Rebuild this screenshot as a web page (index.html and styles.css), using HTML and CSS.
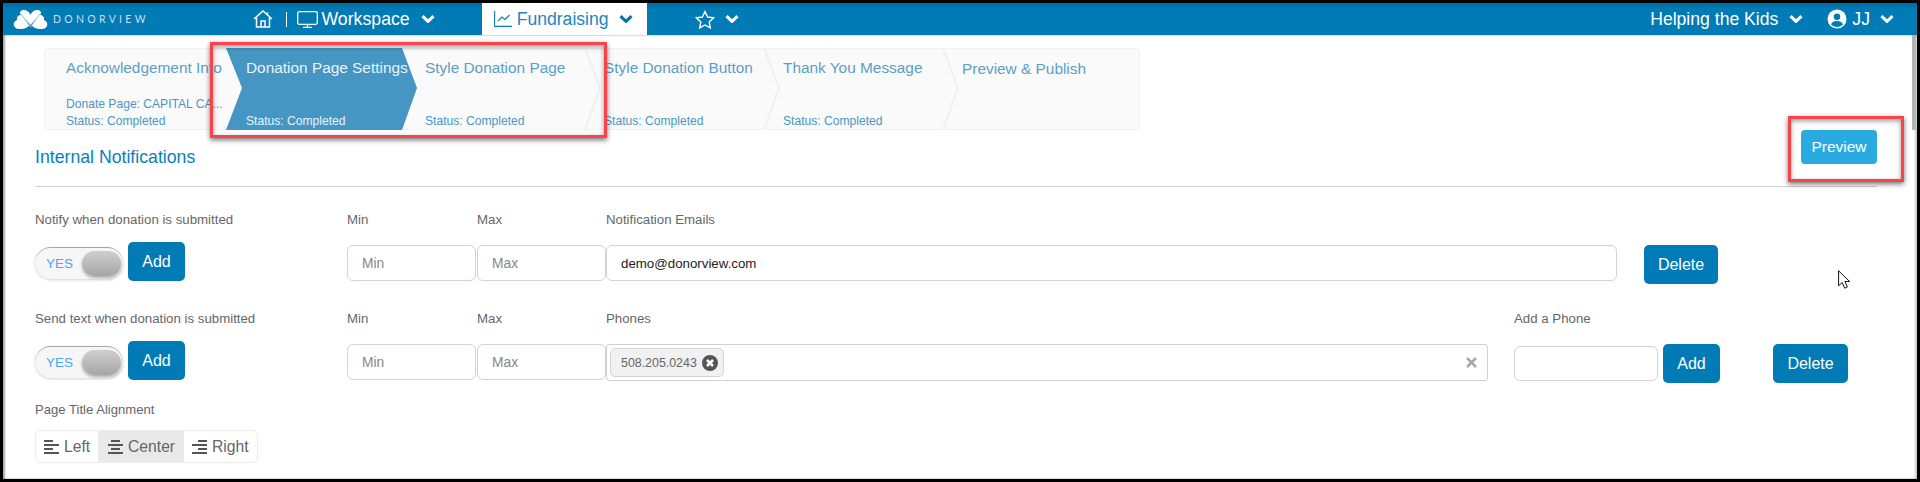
FILE: index.html
```html
<!DOCTYPE html>
<html lang="en">
<head>
<meta charset="utf-8">
<title>Donorview</title>
<link rel="stylesheet" href="styles.css">
</head>
<body>
<div class="frame">
  <header class="topbar">
    <div class="logo">
      <svg class="logo-mark" viewBox="0 0 36 22"><path fill="#fff" d="M9 6C5 6 3 9 4 11.500 1 12.500 0 15 .5 17 1.500 20.500 5 21 8 21c4 0 7-1.500 9-4C14 13 11 9.500 9 6zM27 6c4 0 6 3 5 5.500 3 1 4 3.500 3.500 5.500-1 3.500-4.500 4-7.500 4-4 0-7-1.500-9-4 3-4 6-7.500 8-11z"/><path fill="#fff" d="M18 6c1.500-3 4-5 7-5 3 0 4.500 2 4 4l-9.500 10L18 17l-1.500-2L7 5C6.500 3 8 1 11 1c3 0 5.500 2 7 5z"/><path fill="none" stroke="#a9b6d6" stroke-width="1" d="M8 5l10 14M28 5L18 19"/></svg>
      <span class="wordmark">DONORVIEW</span>
    </div>
    <nav class="nav">
      <svg class="ic-home" viewBox="0 0 20 18" fill="none" stroke="#fff" stroke-width="1.500"><path d="M1 9L10 1l9 8M3.500 7.500V17h13V7.500M8 17v-6h4v6M14.500 2.500v3"/></svg>
      <span class="nav-bar"></span>
      <svg class="ic-monitor" viewBox="0 0 21 17" fill="none" stroke="#fff" stroke-width="1.300"><rect x=".7" y=".7" width="19.600" height="12.600" rx="1.500"/><path d="M10.500 13.500V16M6 16.300h9"/></svg>
      <span class="nav-text">Workspace</span>
      <svg class="chev" viewBox="0 0 14 8" fill="none" stroke="#fff" stroke-width="3"><path d="M1.500 1.200L7 6.400l5.500-5.200"/></svg>
      <a class="tab">
        <svg class="ic-chart" viewBox="0 0 18 16" fill="none" stroke="#0a7cb8" stroke-width="1.100"><path d="M.6 0v15.400H18M4 10l4-4 3 2.500L15.500 4"/></svg>
        <span class="tab-text">Fundraising</span>
        <svg class="chev" viewBox="0 0 14 8" fill="none" stroke="#0a6fa6" stroke-width="3"><path d="M1.500 1.200L7 6.400l5.500-5.200"/></svg>
      </a>
      <svg class="ic-star" viewBox="0 0 20 19" fill="none" stroke="#fff" stroke-width="1.400"><path d="M10 1.500l2.600 5.500 6 .8-4.400 4.100 1.100 6L10 15l-5.300 2.900 1.100-6L1.400 7.800l6-.8z"/></svg>
      <svg class="chev chev-star" viewBox="0 0 14 8" fill="none" stroke="#fff" stroke-width="3"><path d="M1.500 1.200L7 6.400l5.500-5.200"/></svg>
    </nav>
    <div class="account">
      <span class="nav-text org">Helping the Kids</span>
      <svg class="chev" viewBox="0 0 14 8" fill="none" stroke="#fff" stroke-width="3"><path d="M1.500 1.200L7 6.400l5.500-5.200"/></svg>
      <svg class="ic-user" viewBox="0 0 20 20"><circle cx="10" cy="10" r="9.500" fill="#fff"/><circle cx="10" cy="7.800" r="3.300" fill="#007bb6"/><path fill="#007bb6" d="M4 15.500c1-2.800 3-3.600 6-3.600s5 .8 6 3.600c-1.500 1.500-3.500 2.500-6 2.500s-4.500-1-6-2.500z"/></svg>
      <span class="nav-text initials">JJ</span>
      <svg class="chev" viewBox="0 0 14 8" fill="none" stroke="#fff" stroke-width="3"><path d="M1.500 1.200L7 6.400l5.500-5.200"/></svg>
    </div>
  </header>

  <main class="page">
    <section class="steps">
      <div class="step step-first">
        <div class="step-title">Acknowledgement Info</div>
        <div class="step-meta">Donate Page: CAPITAL CA...</div>
        <div class="step-meta">Status: Completed</div>
      </div>
      <div class="step step-active">
        <svg class="step-shape" viewBox="0 0 191 82"><path fill="#4596c3" d="M0 0H176L191 40 176 82H0L16 40z"/></svg>
        <div class="step-title">Donation Page Settings</div>
        <div class="step-meta">Status: Completed</div>
      </div>
      <div class="step">
        <div class="step-title">Style Donation Page</div>
        <div class="step-meta">Status: Completed</div>
      </div>
      <div class="step">
        <svg class="step-sep" viewBox="0 0 18 82" fill="none" stroke="#f1f1f1" stroke-width="2.500"><path d="M1 0l15 40-15 42"/></svg>
        <div class="step-title">Style Donation Button</div>
        <div class="step-meta">Status: Completed</div>
      </div>
      <div class="step">
        <svg class="step-sep" viewBox="0 0 18 82" fill="none" stroke="#f1f1f1" stroke-width="2.500"><path d="M1 0l15 40-15 42"/></svg>
        <div class="step-title">Thank You Message</div>
        <div class="step-meta">Status: Completed</div>
      </div>
      <div class="step">
        <svg class="step-sep" viewBox="0 0 18 82" fill="none" stroke="#f1f1f1" stroke-width="2.500"><path d="M1 0l15 40-15 42"/></svg>
        <div class="step-title step-title-low">Preview &amp; Publish</div>
      </div>
    </section>

    <section class="section-head">
      <h2 class="section-title">Internal Notifications</h2>
      <button class="btn-preview">Preview</button>
    </section>

    <section class="row row-email">
      <label class="lbl">Notify when donation is submitted</label>
      <label class="lbl">Min</label>
      <label class="lbl">Max</label>
      <label class="lbl lbl-wide">Notification Emails</label>
      <div class="toggle-cell">
        <div class="toggle"><span class="toggle-yes">YES</span><span class="knob"></span></div>
        <button class="btn btn-add">Add</button>
      </div>
      <input class="field" placeholder="Min">
      <input class="field" placeholder="Max">
      <input class="field field-email" value="demo@donorview.com">
      <button class="btn btn-delete">Delete</button>
    </section>

    <section class="row row-phone">
      <label class="lbl">Send text when donation is submitted</label>
      <label class="lbl">Min</label>
      <label class="lbl">Max</label>
      <label class="lbl">Phones</label>
      <label class="lbl lbl-add-phone">Add a Phone</label>
      <div class="toggle-cell">
        <div class="toggle"><span class="toggle-yes">YES</span><span class="knob"></span></div>
        <button class="btn btn-add">Add</button>
      </div>
      <input class="field" placeholder="Min">
      <input class="field" placeholder="Max">
      <div class="phones">
        <span class="chip">508.205.0243
          <svg class="chip-x" viewBox="0 0 16 16"><circle cx="8" cy="8" r="8" fill="#555"/><path stroke="#fff" stroke-width="2.600" d="M5 5l6 6M11 5l-6 6"/></svg>
        </span>
        <svg class="clear-x" viewBox="0 0 11 11" stroke="#a8a8a8" stroke-width="2.500"><path d="M1 1l9 9M10 1l-9 9"/></svg>
      </div>
      <input class="field field-phone">
      <button class="btn btn-add-phone">Add</button>
      <button class="btn btn-delete-phone">Delete</button>
    </section>

    <section class="align-block">
      <label class="lbl">Page Title Alignment</label>
      <div class="align-group">
        <span class="align-item align-left">
          <svg class="ic-align" viewBox="0 0 15 14" fill="#555"><path d="M0 0h9v2H0zM0 4h15v2H0zM0 8h9v2H0zM0 12h15v2H0z"/></svg>Left
        </span>
        <span class="align-item align-center is-on">
          <svg class="ic-align" viewBox="0 0 15 14" fill="#555"><path d="M3 0h9v2H3zM0 4h15v2H0zM3 8h9v2H3zM0 12h15v2H0z"/></svg>Center
        </span>
        <span class="align-item align-right">
          <svg class="ic-align" viewBox="0 0 15 14" fill="#555"><path d="M6 0h9v2H6zM0 4h15v2H0zM6 8h9v2H6zM0 12h15v2H0z"/></svg>Right
        </span>
      </div>
    </section>
  </main>

  <div class="scroll-thumb"></div>
  <div class="callout callout-steps"></div>
  <div class="callout callout-preview"></div>
  <svg class="cursor" viewBox="0 0 12 19"><path fill="#fff" stroke="#111" stroke-width="1" d="M.6.8v15l3.600-3.300 2.500 5.700 2.700-1.200-2.500-5.500h4.700z"/></svg>
</div>
</body>
</html>
```
FILE: styles.css
```css
* { box-sizing: border-box; }
html, body { margin: 0; padding: 0; }
body { font-family: "Liberation Sans", Arial, sans-serif; background: #fff; overflow: hidden; }

.frame {
  position: relative;
  width: 1920px;
  height: 482px;
  border: 3px solid #000;
  overflow: hidden;
  background: #fff;
}

/* top bar */
.topbar {
  display: flex;
  align-items: center;
  height: 32px;
  background: linear-gradient(#006a9f 0, #007bb6 6px, #007bb6 100%);
  color: #fff;
}
.logo { display: flex; align-items: center; width: 250px; padding-left: 10px; }
.logo-mark { width: 35px; height: 21px; margin-top: 1px; }
.wordmark {
  margin-left: 5px;
  font-family: Lato, "Liberation Sans", sans-serif;
  font-size: 10.500px;
  letter-spacing: 3.300px;
  color: #c9dfec;
}
.nav { display: flex; align-items: center; height: 100%; }
.ic-home { width: 20px; height: 18px; margin-top: -1px; }
.nav-bar { width: 1px; height: 15px; margin-left: 13px; background: #fff; }
.ic-monitor { width: 21px; height: 17px; margin-left: 10px; }
.nav-text { font-size: 17.700px; line-height: 20px; color: #fff; margin-left: 3.500px; }
.chev { width: 14px; height: 8px; margin-left: 11px; flex: none; }
.tab {
  display: flex;
  align-items: center;
  height: 100%;
  margin-left: 47px;
  padding: 0 14px 0 12px;
  background: #fff;
}
.ic-chart { width: 18px; height: 16px; }
.tab-text { margin-left: 5px; font-size: 17.600px; color: #1e86bd; }
.tab .chev { margin-left: 10px; }
.ic-star { width: 20px; height: 19px; margin-left: 48px; }
.chev-star { margin-left: 10px; }
.account { display: flex; align-items: center; margin-left: auto; padding-right: 23px; }
.org { font-size: 17.600px; margin-left: 0; }
.ic-user { width: 20px; height: 20px; margin-left: 24px; }
.initials { margin-left: 5px; }
.account .chev:last-child { margin-left: 10px; }

/* page */
.page {
  height: 444px;
  box-shadow: inset 2px 0 2px rgba(0, 0, 0, .35), inset -2px 0 2px rgba(0, 0, 0, .2);
}

.steps {
  display: grid;
  grid-template-columns: 182px 179px 179px 179px 179px 1fr;
  width: 1096px;
  height: 82px;
  margin-left: 41px;
  position: relative;
  top: 13px;
  background: #fafafa;
  border-radius: 5px;
  box-shadow: inset 0 0 0 1px #f1f1f1;
}
.step {
  position: relative;
  display: flex;
  flex-direction: column;
  justify-content: flex-end;
  padding: 10px 0 5px 20px;
  white-space: nowrap;
  color: #4b97c4;
}
.step-first { padding-left: 22px; }
.step-title { margin-bottom: auto; font-size: 15.400px; line-height: 20px; color: #5a9fc9; position: relative; }
.step-title-low { top: 1px; margin-bottom: 52px; }
.step-meta { font-size: 12.100px; line-height: 17px; position: relative; }
.step-shape { position: absolute; left: 0; top: 0; width: 191px; height: 82px; }
.step-active .step-title, .step-active .step-meta { color: #e9f3f9; }
.step-sep { position: absolute; left: 0; top: 0; width: 18px; height: 82px; }

/* section heading */
.section-head {
  display: flex;
  justify-content: space-between;
  align-items: flex-start;
  height: 57px;
  margin: 13px 40px 0 32px;
  border-bottom: 1px solid #d2d2d2;
}
.section-title {
  margin: 17px 0 0;
  font-size: 17.700px;
  line-height: 20px;
  font-weight: 400;
  color: #0a7fbc;
}
.btn-preview {
  width: 76px;
  height: 34px;
  padding: 0;
  border: 0;
  border-radius: 4px;
  background: #29abe2;
  color: #fff;
  font: 15.500px "Liberation Sans", Arial, sans-serif;
}

/* form rows */
.row {
  display: grid;
  grid-template-rows: 16px 42px;
  row-gap: 14px;
  margin-left: 32px;
}
.row-email {
  grid-template-columns: 312px 130px 129px 1011px 27px 74px;
  margin-top: 25px;
}
.row-phone {
  grid-template-columns: 312px 130px 129px 882px 26px 144px 5px 57px 53px 75px;
  margin-top: 27px;
}
.lbl {
  font-size: 13.250px;
  line-height: 16px;
  color: #666;
  white-space: nowrap;
}
.lbl-wide { grid-column: 4 / span 3; }
.lbl-add-phone { grid-column: 6 / span 5; }
.toggle-cell { display: flex; align-items: flex-start; gap: 5px; }
.toggle {
  display: flex;
  align-items: center;
  justify-content: space-between;
  width: 88px;
  height: 32px;
  margin-top: 5px;
  padding: 0 2px 0 11px;
  border-radius: 16px;
  background: #f6f6f6;
  border-top: 1px solid #a8a8a8;
  box-shadow: 0 1px 3px rgba(0, 0, 0, .18);
}
.toggle-yes { font-size: 13.500px; color: #4aa8f0; }
.knob {
  width: 39px;
  height: 25px;
  border-radius: 13px;
  background: linear-gradient(#cfcfcf, #a6a6a6);
  box-shadow: 0 2px 3px rgba(0, 0, 0, .3);
}
.btn {
  height: 39px;
  padding: 0;
  border: 0;
  border-radius: 5px;
  background: #007bb6;
  color: #fff;
  font: 16px "Liberation Sans", Arial, sans-serif;
}
.btn-add { width: 57px; }
.btn-delete { grid-column: 6; width: 74px; margin-top: 3px; }
.field {
  width: 129px;
  height: 36px;
  margin-top: 3px;
  padding: 0 14px;
  border: 1px solid #d0d3dc;
  border-radius: 6px;
  background: #fff;
  font: 13.300px "Liberation Sans", Arial, sans-serif;
  color: #222;
  outline: 0;
}
.field::placeholder { color: #888; opacity: 1; font-size: 13.800px; }
.field-email { width: 1011px; grid-column: 4; }
.phones {
  display: flex;
  align-items: center;
  justify-content: space-between;
  width: 882px;
  height: 37px;
  margin-top: 3px;
  padding: 0 5px 0 3px;
  border: 1px solid #d0d0d0;
  border-radius: 3px;
}
.chip {
  display: flex;
  align-items: center;
  justify-content: space-between;
  width: 114px;
  height: 29px;
  padding: 0 5px 0 10px;
  border: 1px solid #d4d4d4;
  border-radius: 5px;
  background: #f1f1f1;
  font-size: 12.400px;
  color: #666;
}
.chip-x { width: 16px; height: 16px; }
.clear-x { width: 11px; height: 11px; margin-right: 5px; }
.row-phone .field-phone { grid-column: 6; grid-row: 2; width: 144px; height: 35px; margin-top: 5px; }
.btn-add-phone { grid-column: 8; grid-row: 2; width: 57px; margin-top: 3px; }
.btn-delete-phone { grid-column: 10; grid-row: 2; width: 75px; margin-top: 3px; }

/* alignment */
.align-block { margin: 19px 0 0 32px; }
.align-block .lbl { display: block; font-size: 13.100px; }
.align-group {
  display: inline-flex;
  height: 33px;
  margin-top: 12px;
  border: 1px solid #ececec;
  border-radius: 5px;
  font-size: 15.700px;
  color: #666;
  overflow: hidden;
}
.align-item { display: flex; align-items: center; gap: 5px; height: 100%; }
.align-left { width: 62px; padding-left: 8px; }
.align-center { width: 86px; padding-left: 10px; }
.align-right { width: 73px; padding-left: 8px; }
.is-on { background: #e9e9e9; }
.ic-align { width: 15px; height: 14px; }

/* overlays */
.scroll-thumb {
  position: absolute;
  right: 1px;
  top: 32px;
  width: 4px;
  height: 95px;
  background: #b4b4b4;
}
.callout {
  position: absolute;
  border: 3px solid #f7444a;
  box-shadow: 0 2px 5px rgba(0, 0, 0, .55), inset 0 2px 5px rgba(0, 0, 0, .4);
}
.callout-steps { left: 207px; top: 39px; width: 397px; height: 96px; }
.callout-preview { left: 1785px; top: 113px; width: 116px; height: 66px; }
.cursor { position: absolute; left: 1835px; top: 267px; width: 12px; height: 19px; }
```
